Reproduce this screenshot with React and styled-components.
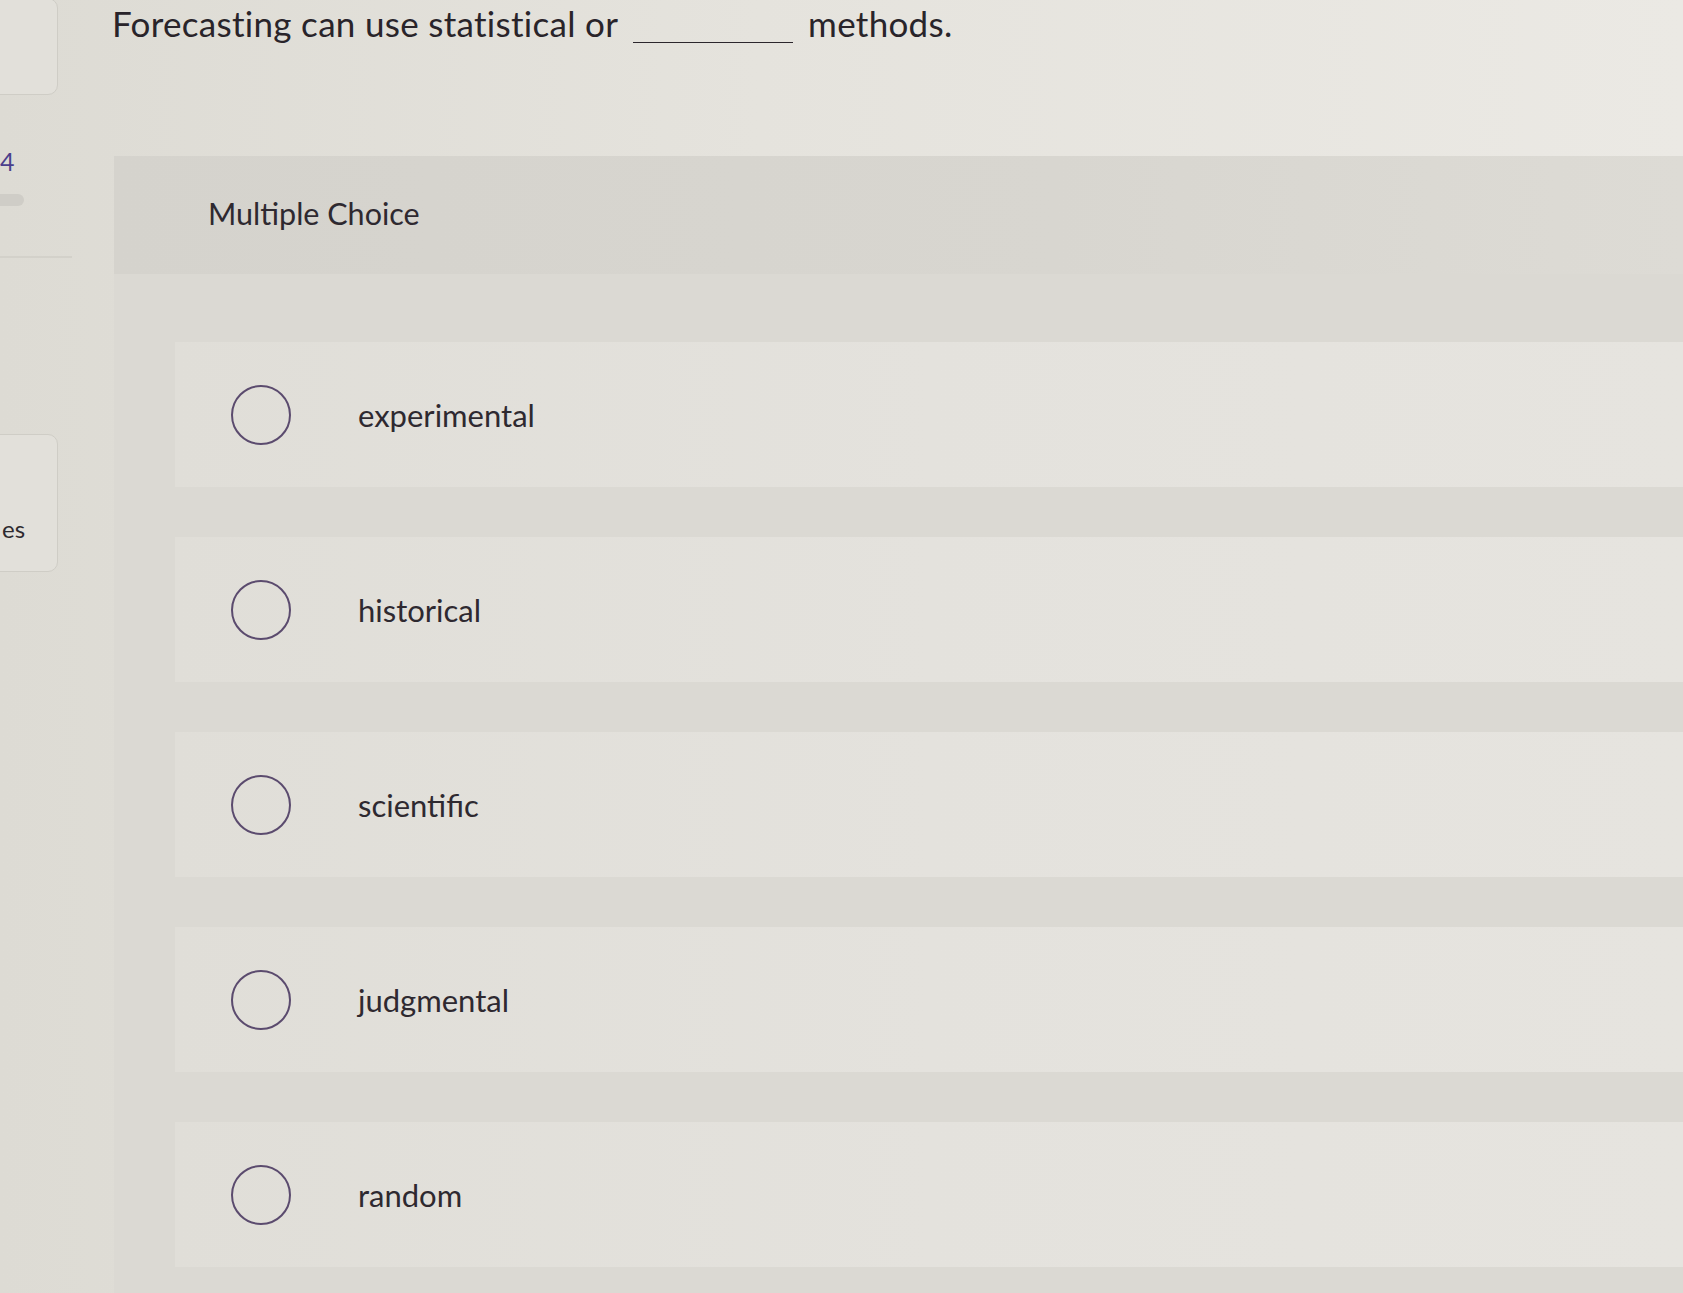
import React from "react"
import styled, { createGlobalStyle } from "styled-components"

const Global = createGlobalStyle`
  html, body {
    margin: 0;
    padding: 0;
    background: #e4e2dc;
    font-family: Lato, "Open Sans", sans-serif;
    color: #2c272d;
  }
  #root {
    height: 1293px;
    overflow: hidden;
  }
`

const Page = styled.div`
  display: grid;
  grid-template-columns: 112px 1fr;
  height: 1293px;
  background: linear-gradient(90deg, #dddbd4 0%, #e5e3dd 45%, #ebe9e4 100%);
`

const Sidebar = styled.aside`
  position: relative;
  overflow: hidden;
  display: flex;
  flex-direction: column;
`

const SideCard = styled.div`
  margin-left: -20px;
  width: 78px;
  height: ${(p) => p.h}px;
  margin-top: ${(p) => p.top}px;
  border: 1.5px solid #cfcdc6;
  border-radius: 0 10px 10px 0;
  background: #e2e0da;
  display: flex;
  align-items: flex-end;
  box-sizing: border-box;
`

const SideNum = styled.div`
  margin-top: 54px;
  padding-left: 0;
  font-size: 25px;
  color: #4b3f8c;
  line-height: 1;
`

const Pill = styled.div`
  margin-top: 20px;
  width: 24px;
  height: 12px;
  border-radius: 0 6px 6px 0;
  background: #cfcdc7;
`

const SideRule = styled.div`
  margin-top: 50px;
  width: 72px;
  height: 1.5px;
  background: #d3d1ca;
`

const SideLabel = styled.span`
  font-size: 24px;
  padding: 0 0 28px 21px;
  color: #2e2a2f;
`

const Main = styled.main`
  display: flex;
  flex-direction: column;
  min-width: 0;
`

const Question = styled.h1`
  margin: 0;
  padding: 0;
  height: 156px;
  box-sizing: border-box;
  font-size: 35px;
  font-weight: 400;
  line-height: 46px;
  color: #29242a;
  letter-spacing: 0.3px;
`

const Blank = styled.span`
  display: inline-block;
  width: 160px;
  margin: 0 6px 0 6px;
  border-bottom: 1.5px solid #2b262c;
  vertical-align: -6px;
`

const Panel = styled.section`
  flex: 1;
  margin-left: 2px;
  background: #dbd9d3;
  display: flex;
  flex-direction: column;
`

const PanelHead = styled.div`
  height: 118px;
  background: linear-gradient(90deg, #d5d3cd 0%, #d8d6d0 60%, #dddbd5 100%);
  display: flex;
  align-items: center;
  padding-left: 94px;
  padding-bottom: 4px;
  box-sizing: border-box;
  font-size: 30.5px;
  color: #2e2930;
`

const Options = styled.div`
  display: flex;
  flex-direction: column;
  gap: 50px;
  padding: 68px 0 0 61px;
`

const Option = styled.label`
  height: 145px;
  display: flex;
  align-items: center;
  gap: 67px;
  padding-left: 56px;
  background: linear-gradient(90deg, #e0ded8 0%, #e4e2dd 50%, #e6e4df 100%);
  font-size: 31px;
  color: #2e2930;
  cursor: pointer;
`

const Radio = styled.span`
  width: 60px;
  height: 60px;
  border-radius: 50%;
  border: 2px solid #5b4b6e;
  box-sizing: border-box;
  flex-shrink: 0;
`

const choices = ["experimental", "historical", "scientific", "judgmental", "random"]

export default function App() {
  return (
    <>
      <Global />
      <Page>
        <Sidebar>
          <SideCard h={97} top={-2} />
          <SideNum>4</SideNum>
          <Pill />
          <SideRule />
          <SideCard h={138} top={176}>
            <SideLabel>es</SideLabel>
          </SideCard>
        </Sidebar>
        <Main>
          <Question>
            Forecasting can use statistical or <Blank /> methods.
          </Question>
          <Panel>
            <PanelHead>Multiple Choice</PanelHead>
            <Options>
              {choices.map((c) => (
                <Option key={c}>
                  <Radio />
                  {c}
                </Option>
              ))}
            </Options>
          </Panel>
        </Main>
      </Page>
    </>
  )
}
